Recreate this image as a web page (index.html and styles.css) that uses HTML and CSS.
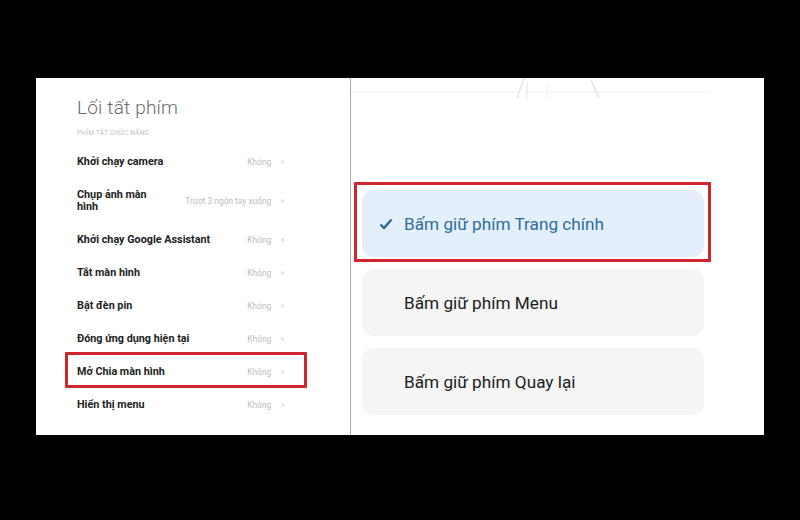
FILE: index.html
```html
<!DOCTYPE html>
<html lang="vi">
<head>
<meta charset="utf-8">
<link rel="stylesheet" href="styles.css">
</head>
<body>
<div class="frame">
  <div class="panel">
    <div class="left">
      <div class="title">Lối tất phím</div>
      <div class="section">PHÍM TẮT CHỨC NĂNG</div>
      <div class="rows">
        <div class="row"><span class="label">Khởi chạy camera</span><span class="value">Không<span class="chev">&gt;</span></span></div>
        <div class="row tall"><span class="label narrow">Chụp ảnh màn hình</span><span class="value small">Trượt 3 ngón tay xuống<span class="chev">&gt;</span></span></div>
        <div class="row"><span class="label">Khởi chạy Google Assistant</span><span class="value">Không<span class="chev">&gt;</span></span></div>
        <div class="row"><span class="label">Tắt màn hình</span><span class="value">Không<span class="chev">&gt;</span></span></div>
        <div class="row"><span class="label">Bật đèn pin</span><span class="value">Không<span class="chev">&gt;</span></span></div>
        <div class="row"><span class="label">Đóng ứng dụng hiện tại</span><span class="value">Không<span class="chev">&gt;</span></span></div>
        <div class="row marked"><span class="label">Mở Chia màn hình</span><span class="value">Không<span class="chev">&gt;</span></span></div>
        <div class="row"><span class="label">Hiển thị menu</span><span class="value">Không<span class="chev">&gt;</span></span></div>
      </div>
    </div>
    <div class="right">
      <svg class="deco" width="412" height="24" viewBox="0 0 412 24">
        <line x1="0" y1="14" x2="360" y2="14" stroke="#f8f8f8" stroke-width="2"/>
        <line x1="166" y1="20" x2="173" y2="0" stroke="#d8d8d8" stroke-width="1"/>
        <line x1="176" y1="20" x2="176" y2="4" stroke="#e2e2e2" stroke-width="1"/>
        <line x1="196" y1="20" x2="196" y2="6" stroke="#ececec" stroke-width="1"/>
        <line x1="240" y1="2" x2="248" y2="20" stroke="#d8d8d8" stroke-width="1"/>
      </svg>
      <div class="options">
        <div class="option selected">
          <svg class="check" width="14" height="12" viewBox="0 0 14 12"><polyline points="1.5,6.5 5,10 12.5,1.5" fill="none" stroke="#2d6a96" stroke-width="2.4"/></svg>
          <span>Bấm giữ phím Trang chính</span>
        </div>
        <div class="option"><span>Bấm giữ phím Menu</span></div>
        <div class="option"><span>Bấm giữ phím Quay lại</span></div>
      </div>
    </div>
  </div>
</div>
</body>
</html>
```
FILE: styles.css
```css
* { box-sizing: border-box; }
html, body { margin: 0; padding: 0; background: #000; }
body { width: 800px; height: 520px; overflow: hidden; font-family: Roboto, "Noto Sans", sans-serif; }
.frame { padding: 78px 0 0 36px; }
.panel {
  width: 728px;
  height: 357px;
  background: #fff;
  display: flex;
}
.left {
  width: 315px;
  padding: 18px 0 0 41px;
  border-right: 1px solid #a9a9a9;
}
.title {
  font-size: 19px;
  font-weight: 300;
  line-height: 24px;
  color: #6a6a6a;
  letter-spacing: 0.2px;
}
.section {
  margin-top: 7px;
  font-size: 6.6px;
  line-height: 12px;
  color: #c4c4c4;
  letter-spacing: 0.2px;
}
.rows { margin-top: 6px; width: 208px; }
.row {
  height: 33px;
  display: flex;
  align-items: center;
  justify-content: space-between;
  position: relative;
}
.row.tall { height: 45px; }
.label {
  font-size: 10.8px;
  font-weight: 700;
  color: #222;
  line-height: 12px;
}
.label.narrow { width: 84px; }
.value {
  font-size: 8.4px;
  color: #bdbdbd;
  display: flex;
  align-items: center;
}
.value.small { font-size: 8.4px; }
.chev {
  margin-left: 9px;
  font-size: 9px;
  color: #c8c8c8;
  transform: scaleX(0.7);
}
.row.marked::after {
  content: "";
  position: absolute;
  left: -12px;
  right: -22px;
  top: -3px;
  bottom: 0;
  border: 3px solid #cf252d;
  border-radius: 1px;
}
.right {
  flex: 1;
  display: flex;
  flex-direction: column;
}
.deco { display: block; }
.options {
  margin-top: 88px;
  padding-left: 11px;
  display: flex;
  flex-direction: column;
  gap: 12px;
}
.option {
  width: 342px;
  height: 67px;
  border-radius: 12px;
  background: #f5f5f5;
  display: flex;
  align-items: center;
  padding-left: 42px;
  font-size: 17.2px;
  color: #1c1c1c;
  position: relative;
}
.option.selected {
  background: #e3effa;
  color: #2f6d9c;
  padding-left: 17px;
}
.check { margin-right: 11px; }
.option.selected::after {
  content: "";
  position: absolute;
  left: -8px;
  right: -7px;
  top: -8px;
  bottom: -5px;
  border: 3.5px solid #cf252d;
}
```
